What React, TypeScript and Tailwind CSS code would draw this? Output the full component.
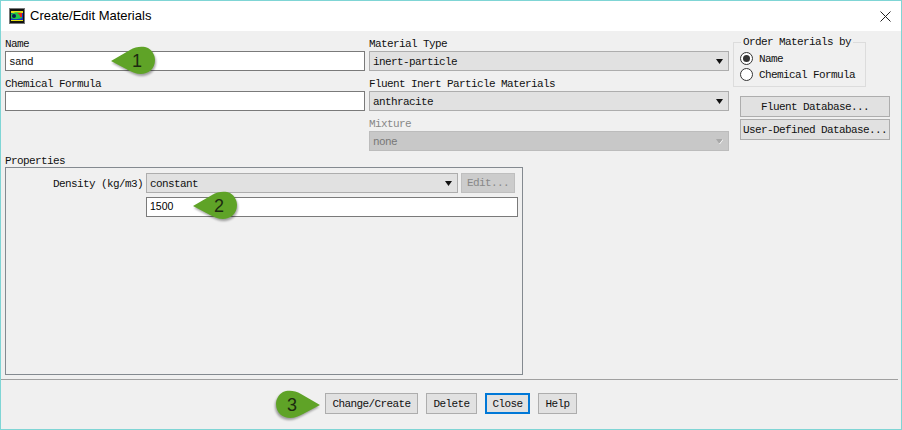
const mono = "font-['Liberation_Mono',monospace] text-[11px] tracking-[-0.6px] leading-[12px] text-[#111]";

function Caret({ disabled = false }: { disabled?: boolean }) {
  return (
    <svg width="7" height="5" viewBox="0 0 7 5" className="shrink-0">
      <path d="M0 0h7L3.5 5z" fill={disabled ? '#a8a8a8' : '#111'} />
      {disabled && <path d="M3 5l4-5v1L4 5z" fill="#fff" />}
    </svg>
  );
}

function Field({ value, className = '', sans = false }: { value?: string; className?: string; sans?: boolean }) {
  return (
    <div
      className={`h-5 bg-white border border-[#7a7a7a] px-[3px] flex items-center ${
        sans ? "font-['Liberation_Sans',sans-serif] text-[10.5px] text-black" : `pt-[2px] ${mono}`
      } ${className}`}
    >
      {value}
    </div>
  );
}

function Select({ value, className = '', disabled = false }: { value: string; className?: string; disabled?: boolean }) {
  return (
    <div
      className={`h-5 border pl-[3px] pr-[5px] flex items-center justify-between ${mono} ${
        disabled ? 'bg-[#c8c8c8] border-[#bcbcbc] !text-[#777]' : 'bg-[#e1e1e1] border-[#adadad]'
      } ${className}`}
    >
      <span className="pt-[1px]">{value}</span>
      <Caret disabled={disabled} />
    </div>
  );
}

function Labeled({ label, children, disabled = false }: { label: string; children: React.ReactNode; disabled?: boolean }) {
  return (
    <div className="flex flex-col">
      <div className={`h-[14px] flex items-center ${mono} ${disabled ? '!text-[#888]' : ''}`}>{label}</div>
      {children}
    </div>
  );
}

function Btn({ children, className = '', focus = false, disabled = false }: { children: React.ReactNode; className?: string; focus?: boolean; disabled?: boolean }) {
  return (
    <div
      className={`flex items-center justify-center ${mono} ${
        focus
          ? 'border-2 border-[#0078d7] bg-[#e1e1e1]'
          : disabled
            ? 'border border-[#bfbfbf] bg-[#cccccc] !text-[#888]'
            : 'border border-[#adadad] bg-[#e1e1e1]'
      } ${className}`}
    >
      {children}
    </div>
  );
}

function Radio({ label, checked = false }: { label: string; checked?: boolean }) {
  return (
    <div className={`h-4 flex items-center gap-[6px] ${mono}`}>
      <span className="w-[13px] h-[13px] rounded-full border border-[#333] bg-white flex items-center justify-center">
        {checked && <span className="w-[7px] h-[7px] rounded-full bg-[#333]" />}
      </span>
      <span className="pt-[2px]">{label}</span>
    </div>
  );
}

// green callout markers drawn over the form
function Marker({ n, className, flip = false }: { n: number; className: string; flip?: boolean }) {
  return (
    <div className={`absolute w-[46px] h-[32px] ${className}`}>
      <svg
        width="46"
        height="32"
        viewBox="0 0 46 32"
        className={`absolute inset-0 drop-shadow-[1px_2px_1px_rgba(0,0,0,0.35)] ${flip ? '-scale-x-100' : ''}`}
      >
        <path d="M1 16 L20 5 C26 1 34 1 38 3 C43 6 45 11 45 15 C45 24 38 29 31 29 C26 29 22 27 18 25 Z" fill="#5fa327" />
      </svg>
      <span
        className={`absolute top-0 h-[32px] flex items-center justify-center font-['Liberation_Sans',sans-serif] text-[18px] text-[#1c2a10] ${
          flip ? 'left-0 w-[34px]' : 'right-0 w-[38px]'
        }`}
      >
        {n}
      </span>
    </div>
  );
}

export default function App() {
  return (
    <div className="w-[902px] h-[430px] flex flex-col border border-[#7fd5d5] bg-[#f0f0f0] relative overflow-hidden">
      {/* title bar */}
      <div className="h-[30px] shrink-0 bg-white flex items-center pl-2 pr-[10px]">
        <svg width="16" height="16" viewBox="0 0 16 16" className="shrink-0">
          <rect width="16" height="16" fill="#777" />
          <rect x="1" y="1" width="14" height="14" fill="#111" />
          <rect x="2" y="3" width="12" height="9" fill="#1437c8" />
          <rect x="2" y="3" width="12" height="2" fill="#e6e018" />
          <path d="M2 6c3-2 8-2 11-1v5c-3 1-8 2-11 0z" fill="#22c84a" />
          <path d="M8 5h5v4h-2c0-2-1-3-3-4z" fill="#e62a1c" />
          <circle cx="5" cy="8" r="2" fill="#071a50" />
          <rect x="2" y="12" width="12" height="1" fill="#e6e018" />
        </svg>
        <span className="ml-[5px] font-['Liberation_Sans',sans-serif] text-[13px] text-black">Create/Edit Materials</span>
        <svg width="11" height="11" viewBox="0 0 11 11" className="ml-auto" stroke="#222" strokeWidth="1">
          <path d="M0.5 0.5l10 10M10.5 0.5l-10 10" />
        </svg>
      </div>

      {/* top form */}
      <div className="flex pl-1 pt-[6px] shrink-0">
        <div className="w-[360px] flex flex-col gap-[6px]">
          <Labeled label="Name">
            <Field value="sand" />
          </Labeled>
          <Labeled label="Chemical Formula">
            <Field />
          </Labeled>
        </div>
        <div className="w-[360px] ml-1 flex flex-col gap-[6px]">
          <Labeled label="Material Type">
            <Select value="inert-particle" />
          </Labeled>
          <Labeled label="Fluent Inert Particle Materials">
            <Select value="anthracite" />
          </Labeled>
          <Labeled label="Mixture" disabled>
            <Select value="none" disabled />
          </Labeled>
        </div>
        <div className="ml-1 w-[157px] flex flex-col">
          <fieldset className="w-[133px] h-[51px] border border-[#dcdcdc] pl-[6px] pt-[2px] -mt-[1px]">
            <legend className={`px-[2px] ml-[1px] ${mono}`}>Order Materials by</legend>
            <Radio label="Name" checked />
            <Radio label="Chemical Formula" />
          </fieldset>
          <div className="ml-[7px] mt-[9px] flex flex-col gap-[2px]">
            <Btn className="w-[150px] h-[21px]">Fluent Database...</Btn>
            <Btn className="w-[150px] h-[21px]">User-Defined Database...</Btn>
          </div>
        </div>
      </div>

      {/* properties */}
      <div className="pl-1 mt-[2px]">
        <div className={`h-[14px] pt-[2px] flex items-center ${mono}`}>Properties</div>
        <div className="w-[518px] h-[208px] border border-[#848a90] pt-[5px]">
          <div className="flex items-center">
            <span className={`w-[140px] pr-[3px] pt-[2px] text-right ${mono}`}>Density (kg/m3)</span>
            <Select value="constant" className="w-[312px]" />
            <Btn disabled className="ml-[3px] w-[54px] h-5">Edit...</Btn>
          </div>
          <Field value="1500" sans className="mt-1 ml-[140px] w-[372px]" />
        </div>
      </div>

      {/* footer */}
      <div className="mt-1 mr-[3px] border-t border-[#a0a0a0]" />
      <div className="flex pl-[324px] pt-[13px] gap-2">
        <Btn className="w-[93px] h-[21px]">Change/Create</Btn>
        <Btn className="w-[51px] h-[21px]">Delete</Btn>
        <Btn focus className="w-[45px] h-[21px]">Close</Btn>
        <Btn className="w-[39px] h-[21px]">Help</Btn>
      </div>

      <Marker n={1} className="left-[109px] top-[44px]" />
      <Marker n={2} className="left-[191px] top-[189px]" />
      <Marker n={3} flip className="left-[274px] top-[388px]" />
    </div>
  );
}
